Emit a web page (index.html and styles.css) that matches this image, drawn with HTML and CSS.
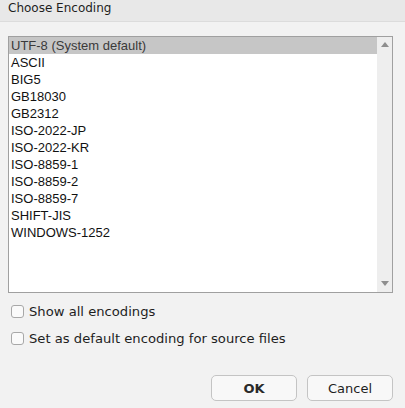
FILE: index.html
```html
<!DOCTYPE html>
<html>
<head>
<meta charset="utf-8">
<link rel="stylesheet" href="styles.css">
</head>
<body>
<div class="dialog">
  <div class="titlebar">Choose Encoding</div>
  <div class="content">
    <div class="listbox">
      <ul class="items">
        <li class="selected">UTF-8 (System default)</li>
        <li>ASCII</li>
        <li>BIG5</li>
        <li>GB18030</li>
        <li>GB2312</li>
        <li>ISO-2022-JP</li>
        <li>ISO-2022-KR</li>
        <li>ISO-8859-1</li>
        <li>ISO-8859-2</li>
        <li>ISO-8859-7</li>
        <li>SHIFT-JIS</li>
        <li>WINDOWS-1252</li>
      </ul>
      <div class="scrollbar">
        <span class="arrow up"></span>
        <span class="arrow down"></span>
      </div>
    </div>
    <label class="check first"><span class="box"></span>Show all encodings</label>
    <label class="check"><span class="box"></span>Set as default encoding for source files</label>
    <div class="buttons">
      <button class="btn ok">OK</button>
      <button class="btn">Cancel</button>
    </div>
  </div>
</div>
</body>
</html>
```

FILE: styles.css
```css
html, body {
  margin: 0;
  padding: 0;
  background: #f2f2f2;
}
.dialog {
  width: 405px;
  height: 408px;
  display: flex;
  flex-direction: column;
  font-family: "DejaVu Sans", sans-serif;
  font-size: 13px;
  color: #1e1e1e;
}
.titlebar {
  height: 22px;
  line-height: 17px;
  padding-left: 8px;
  font-size: 12px;
  background: #e8e8e8;
  border-bottom: 1px solid #dcdcdc;
  box-sizing: border-box;
}
.content {
  padding: 14px 12px 0 8px;
  display: flex;
  flex-direction: column;
}
.listbox {
  height: 257px;
  border: 1px solid #a0a0a0;
  background: #ffffff;
  display: flex;
  box-sizing: border-box;
}
.items {
  list-style: none;
  margin: 0;
  padding: 0;
  flex: 1;
  font-family: "Liberation Sans", Arial, sans-serif;
  font-size: 13px;
  color: #111;
}
.items li {
  height: 17px;
  line-height: 17px;
  padding-left: 2px;
}
.items li.selected {
  background: #c6c6c6;
  color: #3a3a3a;
}
.scrollbar {
  width: 15px;
  background: #eeeeee;
  display: flex;
  flex-direction: column;
  justify-content: space-between;
  align-items: center;
  padding: 5px 0 6px;
}
.arrow {
  width: 0;
  height: 0;
  border-left: 4px solid transparent;
  border-right: 4px solid transparent;
}
.arrow.up {
  border-bottom: 5px solid #8e8e8e;
}
.arrow.down {
  border-top: 5px solid #8e8e8e;
}
.check {
  display: flex;
  align-items: center;
  height: 18px;
  margin-left: 3px;
  margin-top: 9px;
  font-size: 13.15px;
  color: #1e1e1e;
}
.check.first {
  margin-top: 9px;
}
.box {
  width: 11px;
  height: 11px;
  border: 1px solid #a8a8a8;
  border-radius: 3px;
  background: #fafafa;
  margin-right: 5px;
}
.buttons {
  display: flex;
  justify-content: flex-end;
  gap: 10px;
  margin-top: 28px;
}
.btn {
  width: 86px;
  height: 26px;
  border: 1px solid #c4c4c4;
  border-radius: 5px;
  background: #f8f8f8;
  font-family: "DejaVu Sans", sans-serif;
  font-size: 13px;
  color: #1e1e1e;
  padding: 0;
}
.btn.ok {
  font-weight: bold;
  color: #2a2a2a;
}
```
